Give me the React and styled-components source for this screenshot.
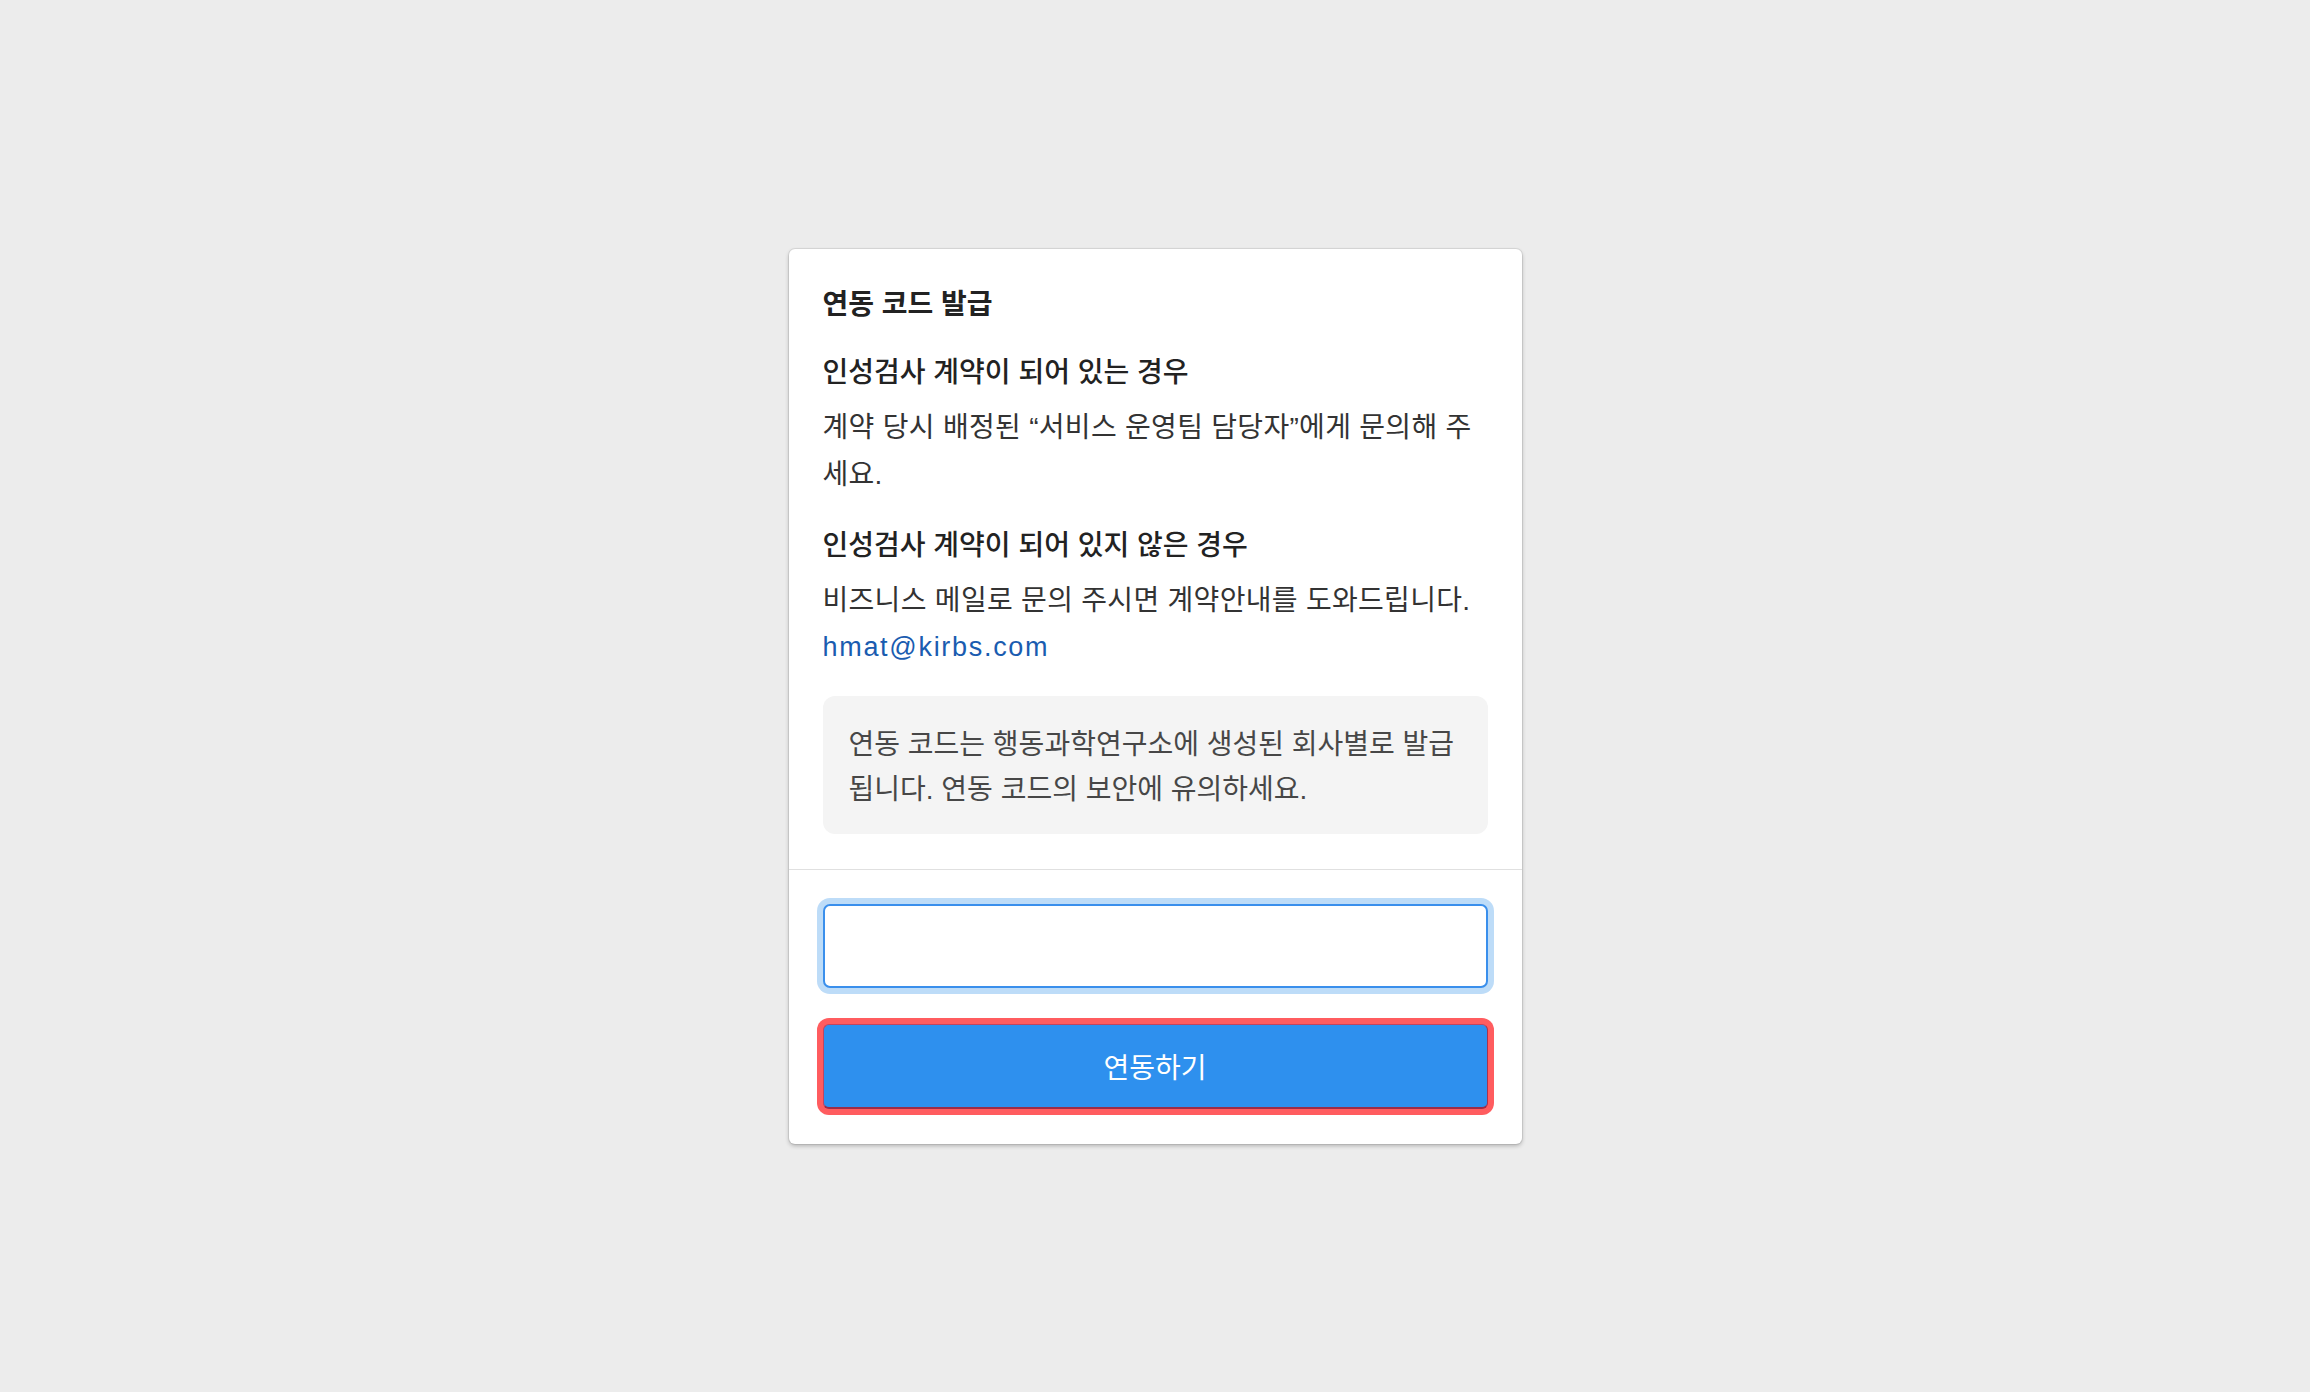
import React, { useState } from 'react';
import styled, { createGlobalStyle } from 'styled-components';

const GlobalStyle = createGlobalStyle`
    html, body {
        margin: 0;
        padding: 0;
        background: #ececec;
    }
    body {
        font-family: "Liberation Sans", "Noto Sans CJK KR", sans-serif;
        -webkit-font-smoothing: antialiased;
    }
    * {
        box-sizing: border-box;
    }
`;

const Page = styled.div`
    min-height: 100vh;
    display: flex;
    align-items: center;
    justify-content: center;
`;

const Card = styled.div`
    width: 733px;
    display: flex;
    flex-direction: column;
    background: #fff;
    border-radius: 6px;
    box-shadow: 0 0 0 1px rgba(0, 0, 0, 0.07), 0 2px 4px rgba(0, 0, 0, 0.24);
`;

const CardBody = styled.div`
    display: flex;
    flex-direction: column;
    padding: 36px 34px 35px;
`;

const Intro = styled.div`
    display: flex;
    flex-direction: column;
    gap: 28px;
`;

const Title = styled.h2`
    margin: 0;
    font-size: 28px;
    line-height: 40px;
    font-weight: 700;
    color: #222;
`;

const Section = styled.div`
    display: flex;
    flex-direction: column;
    gap: 11px;
`;

const Heading = styled.h3`
    margin: 0;
    font-size: 28px;
    line-height: 40px;
    font-weight: 500;
    color: #222;
`;

const Text = styled.p`
    margin: 0;
    font-size: 28px;
    line-height: 47px;
    letter-spacing: 0.3px;
    color: #333;
`;

const MailLink = styled.a`
    display: block;
    font-size: 27px;
    color: #1a5cb0;
    letter-spacing: 1.7px;
    text-decoration: none;
`;

const Notice = styled.div`
    margin-top: 25px;
    padding: 26px 26px 22px;
    border-radius: 12px;
    background: #f4f4f4;
    font-size: 28px;
    line-height: 45px;
    color: #474747;
`;

const Footer = styled.div`
    display: flex;
    flex-direction: column;
    gap: 36px;
    padding: 34px 34px 35px;
    border-top: 1px solid #e0e0e0;
`;

const CodeInput = styled.input`
    width: 100%;
    height: 84px;
    padding: 0 20px;
    border: 2px solid #3a8fec;
    border-radius: 7px;
    outline: none;
    box-shadow: 0 0 0 6px #bddcf8;
    font-family: inherit;
    font-size: 27px;
    color: #333;
    background: #fff;
`;

const SubmitButton = styled.button`
    width: 100%;
    height: 85px;
    border: 1px solid #c04560;
    border-right-color: #a8324e;
    border-bottom: 2px solid #9c2c48;
    border-radius: 6px;
    background: #2e90ee;
    box-shadow: 0 0 0 6px #ff5c5f;
    font-family: inherit;
    font-size: 28px;
    color: #fff;
    cursor: pointer;
`;

const App = () => {
    const [code, setCode] = useState('');

    return (
        <>
            <GlobalStyle />
            <Page>
                <Card>
                    <CardBody>
                        <Intro>
                            <Title>연동 코드 발급</Title>
                            <Section>
                                <Heading>인성검사 계약이 되어 있는 경우</Heading>
                                <Text>계약 당시 배정된 “서비스 운영팀 담당자”에게 문의해 주세요.</Text>
                            </Section>
                            <Section>
                                <Heading>인성검사 계약이 되어 있지 않은 경우</Heading>
                                <Text>
                                    비즈니스 메일로 문의 주시면 계약안내를 도와드립니다.
                                    <MailLink href="mailto:hmat@kirbs.com">hmat@kirbs.com</MailLink>
                                </Text>
                            </Section>
                        </Intro>
                        <Notice>
                            연동 코드는 행동과학연구소에 생성된 회사별로 발급됩니다. 연동 코드의 보안에 유의하세요.
                        </Notice>
                    </CardBody>
                    <Footer>
                        <CodeInput
                            value={code}
                            onChange={(e) => setCode(e.target.value)}
                        />
                        <SubmitButton type="button">연동하기</SubmitButton>
                    </Footer>
                </Card>
            </Page>
        </>
    );
};

export default App;
